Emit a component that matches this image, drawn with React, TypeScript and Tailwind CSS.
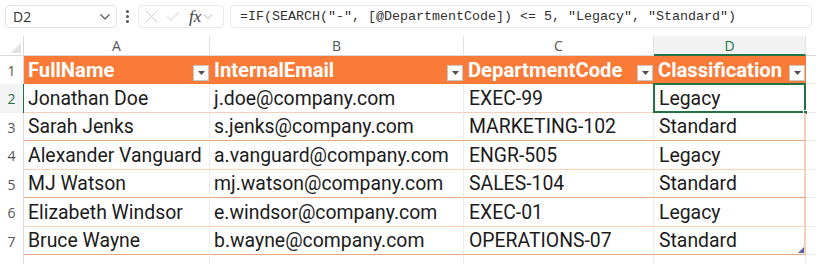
import React from "react";

const rows = [
  ["Jonathan Doe", "j.doe@company.com", "EXEC-99", "Legacy"],
  ["Sarah Jenks", "s.jenks@company.com", "MARKETING-102", "Standard"],
  ["Alexander Vanguard", "a.vanguard@company.com", "ENGR-505", "Legacy"],
  ["MJ Watson", "mj.watson@company.com", "SALES-104", "Standard"],
  ["Elizabeth Windsor", "e.windsor@company.com", "EXEC-01", "Legacy"],
  ["Bruce Wayne", "b.wayne@company.com", "OPERATIONS-07", "Standard"],
];

const heights = ["h-[29px]", "h-[28px]", "h-[29px]", "h-[28px]", "h-[29px]", "h-[28px]"];
const lineColors = ["border-b-[#f6d0b6]", "border-b-[#e8a77f]", "border-b-[#f6d0b6]", "border-b-[#e8a77f]", "border-b-[#f6d0b6]", "border-b-[#e8a77f]"];

const widths = ["w-[186px]", "w-[254px]", "w-[190px]", "w-[152px]"];

function FilterBtn() {
  return (
    <div className="w-[16px] h-[16px] bg-white border border-[#c6c6c6] flex items-center justify-center shrink-0">
      <svg width="7" height="4" viewBox="0 0 7 4">
        <path d="M0 0 L7 0 L3.5 4 Z" fill="#505050" />
      </svg>
    </div>
  );
}

export default function App() {
  const headers = ["FullName", "InternalEmail", "DepartmentCode", "Classification"];
  return (
    <div className="w-[816px] h-[264px] bg-white overflow-hidden" style={{ fontFamily: "Roboto, sans-serif" }}>
      {/* formula bar */}
      <div className="h-[36px] flex items-start pt-[5px] pl-[5px]">
        <div className="w-[112px] h-[23px] border border-[#e3e3e3] rounded-[4px] flex items-center justify-between pl-[7px] pr-[5px]">
          <span className="text-[14px] text-[#303030]" style={{ fontFamily: "'Open Sans', sans-serif" }}>D2</span>
          <svg width="12" height="8" viewBox="0 0 12 8">
            <path d="M1.5 1.5 L6 6 L10.5 1.5" fill="none" stroke="#555" strokeWidth="1.2" />
          </svg>
        </div>
        <div className="w-[21px] h-[23px] flex flex-col items-center justify-center gap-[2px]">
          <div className="w-[3px] h-[3px] bg-[#555] rounded-full" />
          <div className="w-[3px] h-[3px] bg-[#555] rounded-full" />
          <div className="w-[3px] h-[3px] bg-[#555] rounded-full" />
        </div>
        <div className="w-[86px] h-[23px] border border-[#e8e8e8] rounded-[4px] flex items-center pl-[6px]">
          <svg width="13" height="13" viewBox="0 0 13 13" className="mr-[8px]">
            <path d="M1 1 L12 12 M12 1 L1 12" stroke="#cfcfcf" strokeWidth="1" fill="none" />
          </svg>
          <svg width="14" height="11" viewBox="0 0 14 11" className="mr-[9px]">
            <path d="M1 5.5 L5 9.5 L13 1" stroke="#cfcfcf" strokeWidth="1" fill="none" />
          </svg>
          <span className="text-[17px] italic text-[#404040] leading-none mr-[2px]" style={{ fontFamily: "'Liberation Serif', serif" }}>fx</span>
          <svg width="10" height="7" viewBox="0 0 10 7">
            <path d="M1 1.5 L5 5.5 L9 1.5" stroke="#b0b0b0" strokeWidth="1" fill="none" />
          </svg>
        </div>
        <div className="ml-[6px] w-[582px] h-[23px] border border-[#e8e8e8] rounded-[4px] flex items-center pl-[9px]">
          <span className="text-[13.33px] text-[#303030] whitespace-pre" style={{ fontFamily: "'Liberation Mono', monospace" }}>
            {'=IF(SEARCH("-", [@DepartmentCode]) <= 5, "Legacy", "Standard")'}
          </span>
        </div>
      </div>

      {/* column headers */}
      <div className="flex h-[20px] border-b border-[#dadada]">
        <div className="w-[24px] border-r border-[#dadada] relative">
          <svg width="10" height="10" viewBox="0 0 10 10" className="absolute right-[2px] bottom-[2px]">
            <path d="M10 0 L10 10 L0 10 Z" fill="#e2e2e2" />
          </svg>
        </div>
        {["A", "B", "C", "D"].map((l, i) => (
          <div
            key={l}
            className={`${widths[i]} flex items-center justify-center text-[14px] border-r border-[#e2e2e2] ${
              l === "D" ? "text-[#217346] bg-[#f2f2f2] border-b-2 border-b-[#217346] -mb-[1px]" : "text-[#555]"
            }`}
            style={{ fontFamily: "'Open Sans', sans-serif" }}
          >
            {l}
          </div>
        ))}
        <div className="flex-1" />
      </div>

      {/* header row */}
      <div className="flex h-[28px]">
        <div className="w-[24px] border-r border-[#dadada] flex items-center justify-center text-[14px] text-[#555]" style={{ fontFamily: "'Open Sans', sans-serif" }}>
          1
        </div>
        {headers.map((h, i) => (
          <div key={h} className={`${widths[i]} bg-[#f97b37] flex items-stretch justify-between pl-[4px] pr-[1px]`}>
            <span className="text-white font-bold text-[20.2px] leading-[29px]">{h}</span>
            <div className="self-end pb-[3px]">
              <FilterBtn />
            </div>
          </div>
        ))}
        <div className="flex-1 border-b border-[#e6e6e6]" />
      </div>

      {/* data rows */}
      {rows.map((r, ri) => (
        <div key={ri} className={`flex ${heights[ri]}`}>
          <div
            className={`w-[24px] border-r flex items-center justify-center text-[14px] ${
              ri === 0 ? "border-[#217346] text-[#217346] bg-[#f3f3f3]" : "border-[#dadada] text-[#555]"
            }`}
            style={{ fontFamily: "'Open Sans', sans-serif" }}
          >
            {ri + 2}
          </div>
          {r.map((c, ci) => (
            <div
              key={ci}
              className={`${widths[ci]} relative flex items-center pl-[4px] pt-[1px] text-[19.4px] text-[#1b1b1b] border-b ${lineColors[ri]} ${
                ci === 3 ? "border-r-2 border-r-[#f7cfb5]" : "border-r border-r-[#ececec]"
              } ${ci === 2 || ci === 3 ? "pl-[5px]" : ""}`}
            >
              {c}
              {ri === 0 && ci === 3 && (
                <>
                  <div className="absolute -left-[1px] -top-[1px] -right-[2px] -bottom-[1px] border-2 border-[#217346]" />
                  <div className="absolute -right-[4px] -bottom-[3px] w-[5px] h-[5px] bg-[#217346] border border-white" />
                </>
              )}
              {ri === 5 && ci === 3 && (
                <svg width="6" height="6" viewBox="0 0 6 6" className="absolute right-[0px] bottom-[1px]">
                  <path d="M6 0 L6 6 L0 6 Z" fill="#5a5fb0" />
                </svg>
              )}
            </div>
          ))}
          <div className="flex-1 border-b border-[#ececec]" />
        </div>
      ))}

      {/* row 8 partial */}
      <div className="flex h-[20px]">
        <div className="w-[24px] border-r border-[#dadada]" />
        {widths.map((w, i) => (
          <div key={i} className={`${w} border-r border-[#ececec]`} />
        ))}
      </div>
    </div>
  );
}
